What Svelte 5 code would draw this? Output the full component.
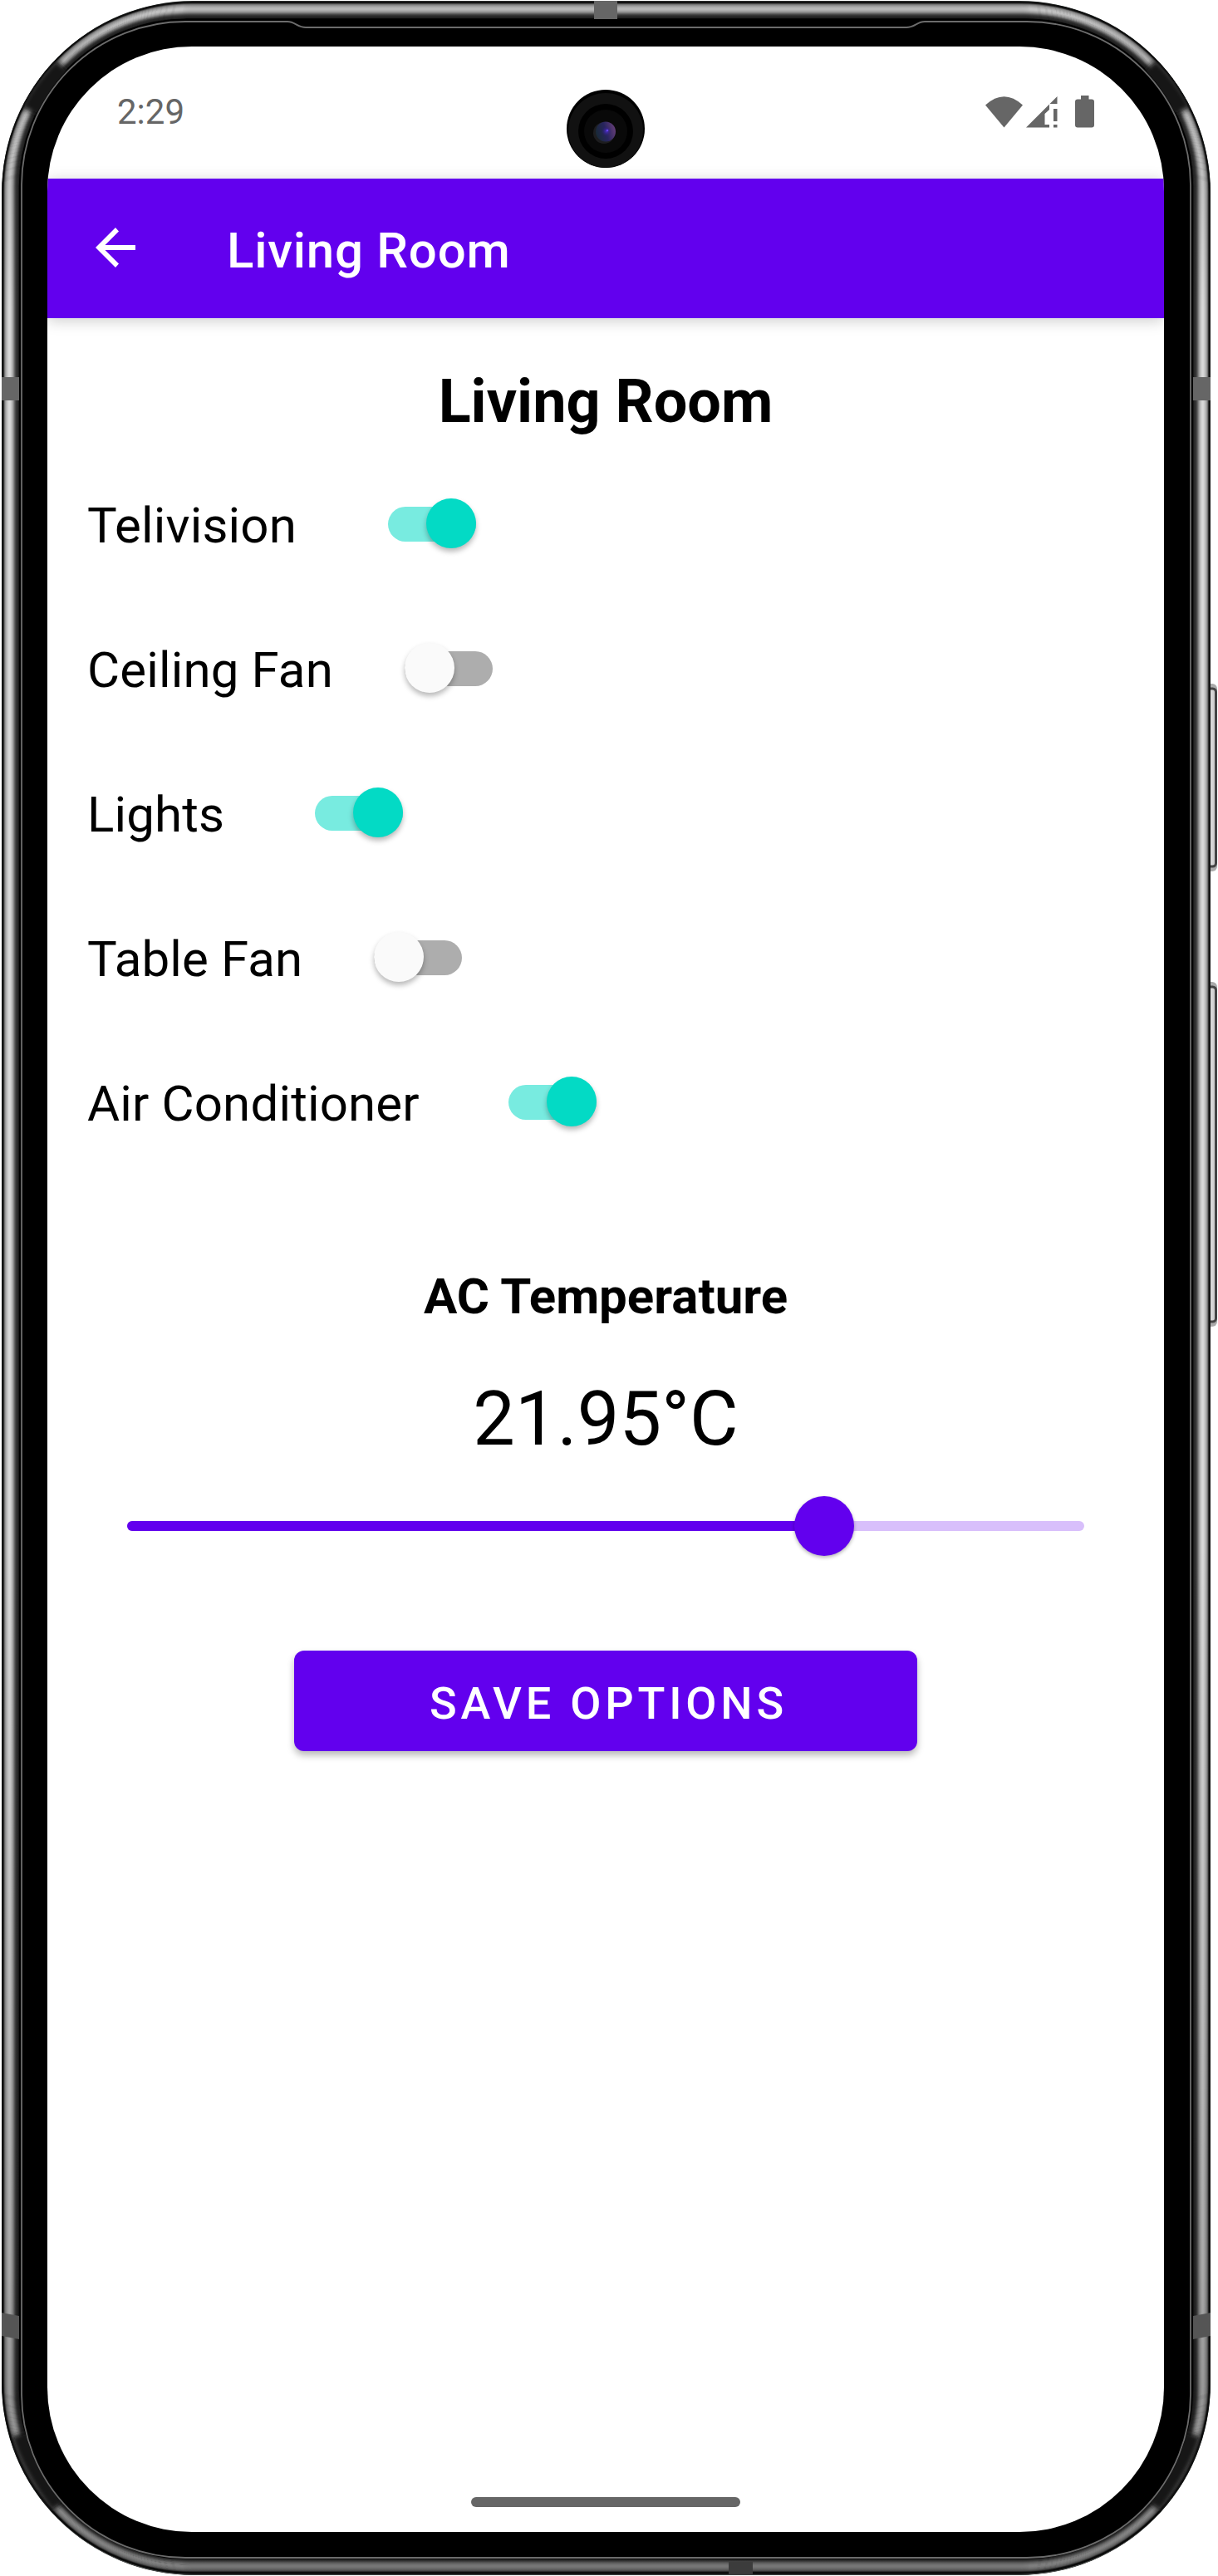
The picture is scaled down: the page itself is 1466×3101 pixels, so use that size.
<script>
  const devices = [
    { name: 'Telivision', on: true, gap: 110.5 },
    { name: 'Ceiling Fan', on: false, gap: 86.5 },
    { name: 'Lights', on: true, gap: 109 },
    { name: 'Table Fan', on: false, gap: 86 },
    { name: 'Air Conditioner', on: true, gap: 107 }
  ];
  const temperature = 21.95;
  const progress = 72.8;
  // Nested strokes that shade the metal rim, from outside to inside
  const rim = [
    [1.5, '#8b908e'], [2.5, '#1c1e1d'], [3.5, '#0b0b0b'], [4.5, '#222'], [5.5, '#666'], [6.5, '#929292'],
    [7.5, '#a8a8a8'], [8.5, '#bbb'], [9.5, '#c8c8c8'], [10.5, '#d4d4d4'], [11.5, '#d8d8d8'], [12.5, '#d6d6d6'],
    [13.5, '#c9c9c9'], [14.5, '#bcbcbc'], [15.5, '#a6a6a6'], [16.5, '#8c8c8c'], [17.5, '#6c6c6c'],
    [18.5, '#505050'], [19.5, '#3d3d3d'], [20.5, '#303030'], [21.5, '#2c2c2c'], [22.5, '#222'], [23.5, '#000'], [24.5, '#000']
  ];
</script>

<div class="phone">
  <svg class="frame" viewBox="0 0 1466 3101" aria-hidden="true">
    <defs>
      <linearGradient id="btn" x1="0" x2="1" y1="0" y2="0">
        <stop offset="0" stop-color="#a8a8a8" /><stop offset=".8" stop-color="#d8d8d8" /><stop offset="1" stop-color="#c4c4c4" />
      </linearGradient>
      <linearGradient id="shade" x1="0" x2="0" y1="0" y2="3101" gradientUnits="userSpaceOnUse">
        <stop offset="0" stop-color="#000" stop-opacity=".07" />
        <stop offset=".02" stop-color="#000" stop-opacity=".2" />
        <stop offset=".05" stop-color="#000" stop-opacity=".15" />
        <stop offset=".12" stop-color="#000" stop-opacity="0" />
        <stop offset=".6" stop-color="#000" stop-opacity="0" />
        <stop offset=".88" stop-color="#000" stop-opacity=".22" />
        <stop offset="1" stop-color="#000" stop-opacity=".42" />
      </linearGradient>
      <filter id="soft" x="-50%" y="-50%" width="200%" height="200%"><feGaussianBlur stdDeviation="3" /></filter>
      <clipPath id="body"><rect x="2" y="1" width="1455" height="3099" rx="231" /></clipPath>
    </defs>
    <rect x="1450" y="823" width="15" height="226" rx="6" fill="#aaa" />
    <rect x="1440" y="829" width="23.500" height="214" rx="4" fill="url(#btn)" stroke="#444" stroke-width="3" />
    <rect x="1450" y="1182" width="15" height="415" rx="6" fill="#aaa" />
    <rect x="1440" y="1188" width="23.500" height="403" rx="4" fill="url(#btn)" stroke="#444" stroke-width="3" />
    <g clip-path="url(#body)">
      <rect x="2" y="1" width="1455" height="3099" rx="231" fill="#000" />
      {#each rim as [d, color]}
        <rect x={d} y={d - 0.5} width={1459 - 2 * d} height={3101 - 2 * d} rx={233 - d * 1.35} fill="none" stroke={color} stroke-width="1.5" />
      {/each}
      <rect x="12" y="11" width="1435" height="3079" rx="217" fill="none" stroke="url(#shade)" stroke-width="22" />
      <g fill="none" stroke="#171717" stroke-width="24" filter="url(#soft)">
        <path d="M36 134Q50 106 76 80" />
        <path d="M1423 134Q1409 106 1383 80" />
        <path d="M25 2930Q38 2972 72 3016" />
        <path d="M1434 2930Q1421 2972 1387 3016" />
      </g>
    </g>
    <g fill="#666">
      <rect x="2" y="454" width="21" height="28" /><rect x="1436" y="454" width="21" height="28" />
      <path d="M2 2784L23 2788V2816L2 2812ZM1457 2784L1436 2788V2816L1457 2812Z" fill="#555" />
      <rect x="715" y="1" width="28" height="22" /><rect x="877" y="3084" width="29" height="16" fill="#3c3c3c" />
    </g>
    <rect x="24.500" y="23.500" width="1410" height="3057" rx="200" fill="#000" />
    <path d="M26 223A197 197 0 0 1 223 26H346C355 26 358 33 368 33H1091C1101 33 1104 26 1113 26H1236A197 197 0 0 1 1433 223V2882A197 197 0 0 1 1236 3079H223A197 197 0 0 1 26 2882Z" fill="none" stroke="#6c6c6c" stroke-width="1.800" />
  </svg>

  <main class="screen">
    <header class="status">
      <time>2:29</time>
      <svg class="indicators" viewBox="0 0 132 40" aria-hidden="true">
        <path d="M0 11.500Q22.500-9 45 11.500L22.500 38.500Z" />
        <path d="M49 38.500L86.500 1V10H77V17L71.500 22V35H77V38.500ZM82 16H86.500V31H82ZM82 35H86.500V38.500H82Z" />
        <path d="M115 0H124.500V4.500H128Q131 4.500 131 7.500V35.500Q131 38.500 128 38.500H111Q108 38.500 108 35.500V7.500Q108 4.500 111 4.500H115Z" />
      </svg>
      <svg class="camera" viewBox="0 0 94 94" aria-hidden="true">
        <defs>
          <linearGradient id="lens" x1="0" x2="1" y1=".6" y2=".3">
            <stop offset="0" stop-color="#182a35" /><stop offset=".5" stop-color="#28245e" /><stop offset="1" stop-color="#673f78" />
          </linearGradient>
          <radialGradient id="glow">
            <stop offset="0" stop-color="#4a2fc4" /><stop offset="1" stop-color="#2a1b79" stop-opacity="0" />
          </radialGradient>
        </defs>
        <circle cx="47" cy="47" r="47" fill="#000" /><circle cx="47" cy="49" r="45" fill="#111" />
        <circle cx="47" cy="50" r="33" fill="#000" /><circle cx="47" cy="50" r="26" fill="#090909" />
        <circle cx="45" cy="52" r="13" fill="#1d1d1f" /><circle cx="47" cy="50.500" r="12" fill="url(#lens)" />
        <circle cx="48" cy="50" r="6" fill="url(#glow)" /><circle cx="49" cy="49" r="1.300" fill="#6544ed" />
      </svg>
    </header>

    <nav class="appbar">
      <svg class="back" viewBox="0 0 48 48" aria-hidden="true"><path d="M48 21V27H11.500L28 43.500L24 48L0 24L24 0L28 4.500L11.500 21Z" /></svg>
      <span class="title">Living Room</span>
    </nav>

    <section class="content">
      <h1>Living Room</h1>
      <div class="devices">
        {#each devices as device}
          <div class="device">
            <span class="name">{device.name}</span>
            <span class="switch" class:on={device.on} style:margin-left="{device.gap}px"><i></i></span>
          </div>
        {/each}
      </div>
      <h2>AC Temperature</h2>
      <div class="degrees">{temperature}°C</div>
      <div class="slider">
        <div class="fill" style:width="{progress}%"></div>
        <div class="knob"></div>
      </div>
      <button>SAVE OPTIONS</button>
    </section>
    <div class="home"></div>
  </main>
</div>

<style>
  :global(body) { margin: 0; background: #fff; }
  .phone {
    position: relative;
    box-sizing: border-box;
    width: 1466px;
    height: 3101px;
    padding: 56px 65px 53px 57px;
    font-family: Roboto, sans-serif;
    color: #000;
  }
  .frame { position: absolute; inset: 0; width: 1466px; height: 3101px; }
  .screen {
    position: relative;
    display: flex;
    flex-direction: column;
    align-items: center;
    width: 1344px;
    height: 2992px;
    overflow: hidden;
    border-radius: 174px;
    background: #fff;
  }
  .status {
    position: relative;
    box-sizing: border-box;
    display: flex;
    justify-content: space-between;
    width: 100%;
    height: 159px;
    padding: 59px 83px 0 84px;
    color: #666;
  }
  time { margin-top: -1px; font-size: 42px; line-height: 42px; }
  .indicators { width: 132px; height: 40px; fill: #666; }
  .camera { position: absolute; left: 625px; top: 52px; width: 94px; height: 94px; z-index: 2; }
  .appbar {
    display: flex;
    align-items: center;
    box-sizing: border-box;
    width: 100%;
    height: 168px;
    padding-left: 58px;
    background: #6200ee;
    box-shadow: 0 3px 17px rgba(0, 0, 0, .2);
    color: #fff;
  }
  .back { width: 48px; height: 48px; margin-bottom: 2px; fill: #fff; }
  .title { margin: 6px 0 0 110px; font-size: 60px; font-weight: 500; line-height: 72px; letter-spacing: .750px; }
  .content { display: flex; flex-direction: column; align-items: center; width: 100%; }
  h1 { margin: 57px 0 0; font-size: 72px; line-height: 88px; font-weight: 700; }
  .devices { display: flex; flex-direction: column; align-self: flex-start; margin-top: 16px; padding-left: 48px; }
  .device { display: flex; align-items: center; height: 174px; font-size: 60px; }
  .name { padding-top: 2px; letter-spacing: .150px; }
  .switch { position: relative; width: 106px; height: 42px; border-radius: 21px; background: #adadad; }
  .switch i {
    position: absolute;
    left: 0;
    top: -10px;
    width: 60px;
    height: 60px;
    border-radius: 50%;
    background: #fafafa;
    box-shadow: 0 4px 6px rgba(0, 0, 0, .28);
  }
  .switch.on { background: #78ebe0; }
  .switch.on i { left: 46px; background: #03dac5; }
  h2 { margin: 111px 0 0; font-size: 60px; line-height: 72px; }
  .degrees { margin-top: 59px; font-size: 90px; line-height: 106px; letter-spacing: .150px; }
  .slider { position: relative; display: flex; align-items: center; width: 1152px; height: 72px; margin-top: 39px; }
  .slider::before { content: ''; position: absolute; inset: 30px 0; border-radius: 6px; background: #d8bffb; }
  .fill { position: relative; height: 12px; border-radius: 6px; background: #6200ee; }
  .knob { position: relative; width: 72px; height: 72px; margin-left: -36px; border-radius: 50%; background: #6200ee; box-shadow: 0 2px 4px rgba(0, 0, 0, .3); }
  button {
    width: 750px;
    height: 121px;
    margin: 114px 0 0;
    padding: 5px 0 0 7px;
    border: 0;
    border-radius: 12px;
    background: #6200ee;
    box-shadow: 0 5px 9px rgba(0, 0, 0, .28);
    color: #fff;
    font: 500 54px Roboto, sans-serif;
    letter-spacing: 4.800px;
  }
  .home { width: 324px; height: 12px; margin: auto 0 30px; border-radius: 6px; background: #666; }
</style>
